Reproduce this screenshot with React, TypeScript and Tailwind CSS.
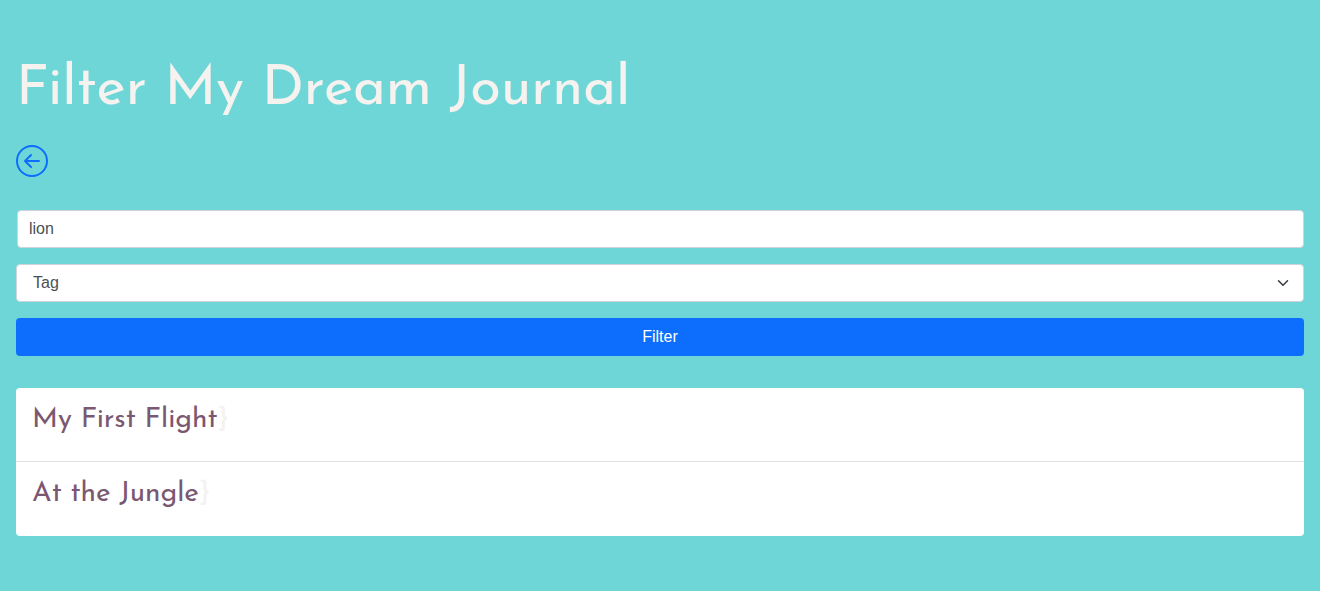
import { BsArrowLeftCircle } from "react-icons/bs";

const dreams = ["My First Flight", "At the Jungle"];

export default function App() {
  return (
    <main className="min-h-screen bg-[#6ed6d7] px-4 pt-12 pb-14 font-['Liberation_Sans',Arial,sans-serif] text-base text-[#f5f2ef]">
      <h1 className="pt-1.5 font-['Josefin_Sans',Lato,sans-serif] text-[56px] leading-[72px]">
        Filter My Dream Journal
      </h1>
      <a href="#journal" aria-label="Back to journal" className="mt-[19px] block w-8 text-[#0d6efd]">
        <BsArrowLeftCircle size={32} />
      </a>

      <form className="mt-[33px] flex flex-col gap-4" onSubmit={(e) => e.preventDefault()}>
        <input
          type="text"
          aria-label="Search"
          defaultValue="lion"
          className="ml-px h-[38px] rounded border border-[#ced4da] bg-white px-[11px] text-[#495057] outline-none"
        />
        <div className="grid items-center">
          <select
            aria-label="Tag"
            className="col-start-1 row-start-1 h-[38px] w-full appearance-none rounded border border-[#ced4da] bg-white px-4 text-[#495057] outline-none"
          >
            <option>Tag</option>
          </select>
          <svg
            viewBox="0 0 16 16"
            className="pointer-events-none col-start-1 row-start-1 mr-[13px] h-3 w-4 justify-self-end"
            fill="none"
            stroke="#343a40"
            strokeWidth="2"
            strokeLinecap="round"
            strokeLinejoin="round"
          >
            <path d="m2 5 6 6 6-6" />
          </svg>
        </div>
        <button type="submit" className="h-[38px] rounded bg-[#0d6efd] text-white">
          Filter
        </button>
      </form>

      <ul className="mt-8 divide-y divide-[#dfdfdf] overflow-hidden rounded bg-white">
        {dreams.map((title) => (
          <li
            key={title}
            className="h-[74px] px-4 pt-3.5 font-['Josefin_Sans',Lato,sans-serif] text-[28px] leading-9"
          >
            <a href="#dream" className="text-[#7b5871]">
              {title}
            </a>
            {"}"}
          </li>
        ))}
      </ul>
    </main>
  );
}
